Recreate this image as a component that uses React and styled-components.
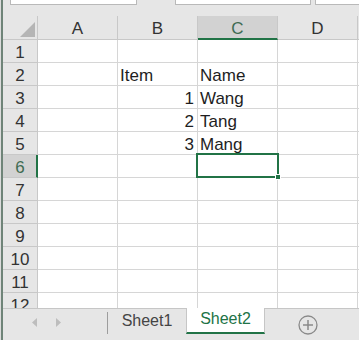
import React from "react";
import styled, { createGlobalStyle, css } from "styled-components";

const GREEN = "#217346";
const CHROME = "#e6e6e6";
const GRID = "#d6d6d6";
const HEAD_LINE = "#c8c8c8";

const GlobalStyle = createGlobalStyle`
  html, body { margin: 0; padding: 0; background: ${CHROME}; }
  body { font-family: "Liberation Sans", Arial, sans-serif; }
  * { box-sizing: border-box; }
`;

const Window = styled.div`
  display: flex;
  width: 359px;
  height: 340px;
  background: ${CHROME};
  overflow: hidden;
`;

const EdgeBar = styled.div`
  flex: 0 0 3px;
  background: #6f8478;
  border-left: 1px solid #dcdcdc;
`;

const Main = styled.div`
  flex: 1;
  display: flex;
  flex-direction: column;
  min-width: 0;
`;

const FormulaStrip = styled.div`
  height: 16px;
  display: flex;
  align-items: flex-start;
`;

const FieldBox = styled.div`
  height: 5px;
  background: #fff;
  border: 1px solid #b9b9b9;
  border-top: none;
  margin-left: ${(p) => p.$gap}px;
  ${(p) => (p.$width ? css`width: ${p.$width}px;` : css`flex: 1; border-right: none;`)}
`;

const Sheet = styled.div`
  display: grid;
  grid-template-columns: 35px repeat(4, 80px) 1fr;
  grid-template-rows: 24px;
  grid-auto-rows: 23px;
  height: 292px;
  overflow: hidden;
  font-size: 17px;
`;

const Corner = styled.div`
  background: ${CHROME};
  border-right: 1px solid ${HEAD_LINE};
  border-bottom: 1px solid ${HEAD_LINE};
  display: flex;
  align-items: flex-end;
  justify-content: flex-end;
  padding: 0 2px 2px 0;
`;

const ColHeader = styled.div`
  background: ${(p) => (p.$active ? "#d2d2d2" : CHROME)};
  color: ${(p) => (p.$active ? "#3f6b52" : "#333")};
  border-right: 1px solid ${HEAD_LINE};
  border-bottom: ${(p) => (p.$active ? `2px solid ${GREEN}` : `1px solid ${HEAD_LINE}`)};
  display: flex;
  align-items: flex-end;
  justify-content: center;
  padding-bottom: ${(p) => (p.$active ? 0 : 1)}px;
  line-height: 18px;
`;

const RowHeader = styled.div`
  background: ${(p) => (p.$active ? "#d2d2d2" : CHROME)};
  color: ${(p) => (p.$active ? "#3f6b52" : "#333")};
  border-right: ${(p) => (p.$active ? `2px solid ${GREEN}` : `1px solid ${HEAD_LINE}`)};
  border-bottom: 1px solid ${HEAD_LINE};
  display: flex;
  align-items: flex-end;
  justify-content: center;
  padding-left: ${(p) => (p.$active ? 1 : 0)}px;
  line-height: 18px;
`;

const Cell = styled.div`
  position: relative;
  z-index: ${(p) => (p.$selected ? 2 : "auto")};
  background: #fff;
  color: #1e1e1e;
  border-right: 1px solid ${GRID};
  border-bottom: 1px solid ${GRID};
  display: flex;
  align-items: flex-end;
  justify-content: ${(p) => (p.$align === "right" ? "flex-end" : "flex-start")};
  padding: 0 3px 0 2px;
  line-height: 18px;
  white-space: nowrap;
`;

const Selection = styled.div`
  position: absolute;
  top: -2px;
  left: -2px;
  right: -2px;
  bottom: -1px;
  border: 2px solid ${GREEN};
  pointer-events: none;
`;

const FillHandle = styled.div`
  position: absolute;
  right: -4px;
  bottom: -4px;
  width: 6px;
  height: 6px;
  background: ${GREEN};
  border: 1px solid #fff;
`;

const TabBar = styled.div`
  flex: 1;
  display: flex;
  align-items: flex-start;
  border-top: 1px solid #c6c6c6;
  background: ${CHROME};
`;

const NavArrows = styled.div`
  width: 104px;
  height: 25px;
  display: flex;
  align-items: center;
  gap: 19px;
  padding-left: 29px;
  padding-top: 2px;
`;

const Divider = styled.div`
  width: 1px;
  height: 22px;
  margin-top: 3px;
  background: #9d9d9d;
`;

const Tab = styled.div`
  width: ${(p) => (p.$active ? 79 : 78)}px;
  height: ${(p) => (p.$active ? 26 : 25)}px;
  margin-top: ${(p) => (p.$active ? -1 : 0)}px;
  display: flex;
  align-items: center;
  justify-content: center;
  padding-bottom: 2px;
  font-size: 16px;
  color: ${(p) => (p.$active ? GREEN : "#444")};
  background: ${(p) => (p.$active ? "#fff" : "transparent")};
  ${(p) =>
    p.$active &&
    css`
      border-left: 1px solid #c6c6c6;
      border-right: 1px solid #c6c6c6;
      border-bottom: 2px solid ${GREEN};
    `}
`;

const AddButton = styled.div`
  margin-left: 33px;
  margin-top: 6px;
  width: 20px;
  height: 20px;
  display: flex;
`;

const Arrow = ({ dir }) => (
  <svg width="5" height="9" viewBox="0 0 5 9">
    <polygon
      points={dir === "left" ? "5,0 5,9 0,4.5" : "0,0 0,9 5,4.5"}
      fill="#bdbdbd"
    />
  </svg>
);

const cols = ["A", "B", "C", "D"];
const data = {
  2: { B: ["Item", "left"], C: ["Name", "left"] },
  3: { B: ["1", "right"], C: ["Wang", "left"] },
  4: { B: ["2", "right"], C: ["Tang", "left"] },
  5: { B: ["3", "right"], C: ["Mang", "left"] },
};

export default function App() {
  const rows = Array.from({ length: 12 }, (_, i) => i + 1);
  return (
    <>
      <GlobalStyle />
      <Window>
        <EdgeBar />
        <Main>
          <FormulaStrip>
            <FieldBox $gap={7} $width={127} />
            <FieldBox $gap={38} $width={136} />
            <FieldBox $gap={4} />
          </FormulaStrip>
          <Sheet>
            <Corner>
              <svg width="15" height="15" viewBox="0 0 15 15">
                <polygon points="15,0 15,15 0,15" fill="#b5b5b5" />
              </svg>
            </Corner>
            {cols.map((c) => (
              <ColHeader key={c} $active={c === "C"}>
                {c}
              </ColHeader>
            ))}
            <ColHeader />
            {rows.map((r) => (
              <React.Fragment key={r}>
                <RowHeader $active={r === 6}>{r}</RowHeader>
                {cols.map((c) => {
                  const v = data[r] && data[r][c];
                  const sel = r === 6 && c === "C";
                  return (
                    <Cell key={c} $align={v ? v[1] : "left"} $selected={sel}>
                      {v ? v[0] : ""}
                      {sel && (
                        <Selection>
                          <FillHandle />
                        </Selection>
                      )}
                    </Cell>
                  );
                })}
                <Cell />
              </React.Fragment>
            ))}
          </Sheet>
          <TabBar>
            <NavArrows>
              <Arrow dir="left" />
              <Arrow dir="right" />
            </NavArrows>
            <Divider />
            <Tab>Sheet1</Tab>
            <Tab $active>Sheet2</Tab>
            <AddButton>
              <svg width="20" height="20" viewBox="0 0 20 20">
                <circle cx="10" cy="10" r="9" fill="none" stroke="#8a8a8a" strokeWidth="1.3" />
                <line x1="5" y1="10" x2="15" y2="10" stroke="#8a8a8a" strokeWidth="1.5" />
                <line x1="10" y1="5" x2="10" y2="15" stroke="#8a8a8a" strokeWidth="1.5" />
              </svg>
            </AddButton>
          </TabBar>
        </Main>
      </Window>
    </>
  );
}
